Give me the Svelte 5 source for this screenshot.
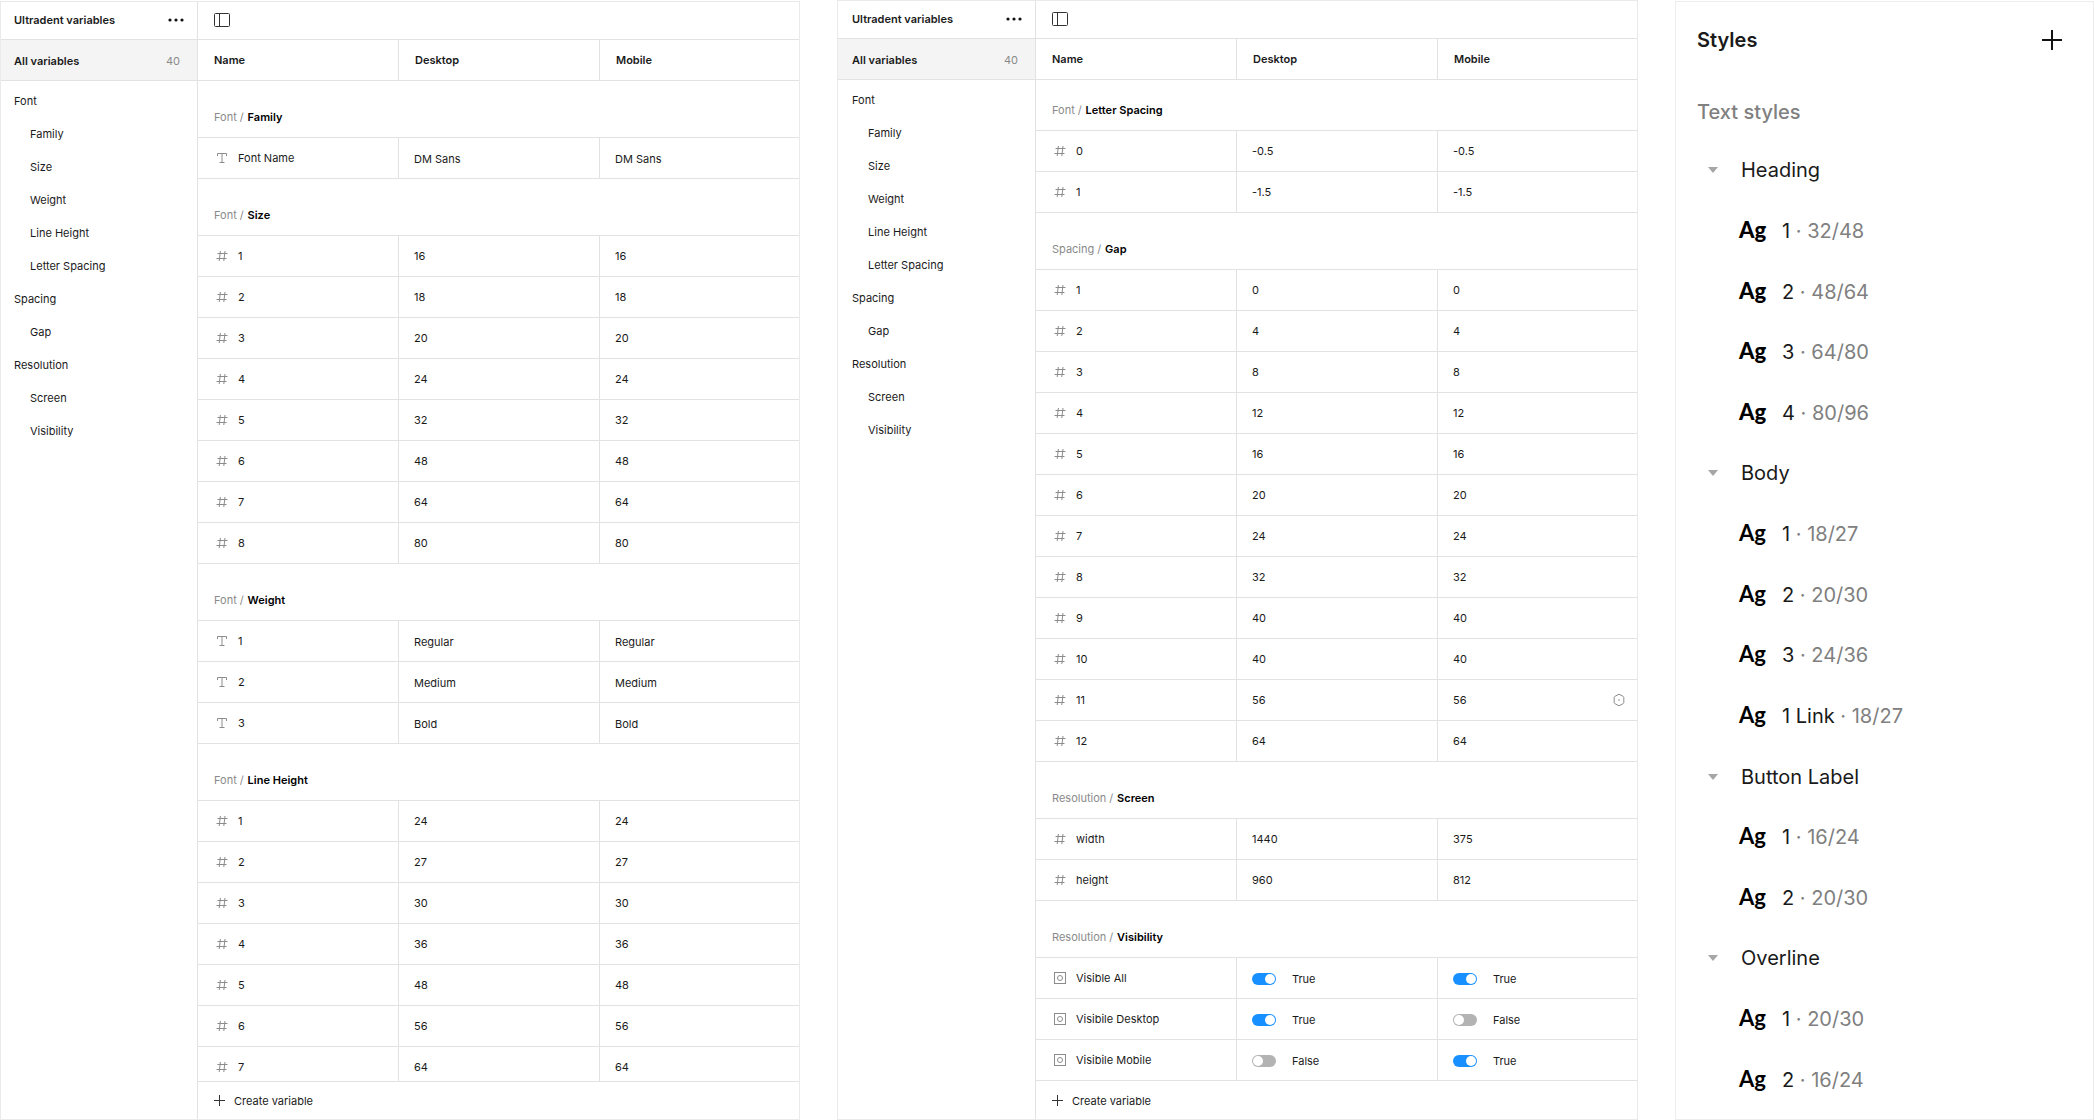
<script>
  const nav = [
    { label: 'Font', children: ['Family', 'Size', 'Weight', 'Line Height', 'Letter Spacing'] },
    { label: 'Spacing', children: ['Gap'] },
    { label: 'Resolution', children: ['Screen', 'Visibility'] }
  ];

  const numbers = (values) =>
    values.map((v, i) => ({ name: String(i + 1), kind: 'number', values: [v, v] }));
  const strings = (values) =>
    values.map((v, i) => ({ name: String(i + 1), kind: 'text', values: [v, v] }));

  const panels = [
    {
      id: 'first',
      groups: [
        { parent: 'Font', name: 'Family', rows: [{ name: 'Font Name', kind: 'text', values: ['DM Sans', 'DM Sans'] }] },
        { parent: 'Font', name: 'Size', rows: numbers([16, 18, 20, 24, 32, 48, 64, 80]) },
        { parent: 'Font', name: 'Weight', rows: strings(['Regular', 'Medium', 'Bold']) },
        { parent: 'Font', name: 'Line Height', rows: numbers([24, 27, 30, 36, 48, 56, 64]) }
      ]
    },
    {
      id: 'second',
      groups: [
        {
          parent: 'Font',
          name: 'Letter Spacing',
          rows: [
            { name: '0', kind: 'number', values: ['-0.5', '-0.5'] },
            { name: '1', kind: 'number', values: ['-1.5', '-1.5'] }
          ]
        },
        {
          parent: 'Spacing',
          name: 'Gap',
          rows: numbers([0, 4, 8, 12, 16, 20, 24, 32, 40, 40, 56, 64]).map((r) =>
            r.name === '11' ? { ...r, alias: true } : r
          )
        },
        {
          parent: 'Resolution',
          name: 'Screen',
          rows: [
            { name: 'width', kind: 'number', values: [1440, 375] },
            { name: 'height', kind: 'number', values: [960, 812] }
          ]
        },
        {
          parent: 'Resolution',
          name: 'Visibility',
          rows: [
            { name: 'Visible All', kind: 'boolean', values: [true, true] },
            { name: 'Visibile Desktop', kind: 'boolean', values: [true, false] },
            { name: 'Visibile Mobile', kind: 'boolean', values: [false, true] }
          ]
        }
      ]
    }
  ];

  const modes = ['Desktop', 'Mobile'];

  const styleRows = [
    { folder: 'Heading' },
    { name: '1', size: '32/48', weight: 'bold' },
    { name: '2', size: '48/64', weight: 'bold' },
    { name: '3', size: '64/80', weight: 'bold' },
    { name: '4', size: '80/96', weight: 'bold' },
    { folder: 'Body' },
    { name: '1', size: '18/27', weight: 'medium' },
    { name: '2', size: '20/30', weight: 'medium' },
    { name: '3', size: '24/36', weight: 'medium' },
    { name: '1 Link', size: '18/27', weight: 'medium' },
    { folder: 'Button Label' },
    { name: '1', size: '16/24', weight: 'medium' },
    { name: '2', size: '20/30', weight: 'medium' },
    { folder: 'Overline' },
    { name: '1', size: '20/30', weight: 'medium' },
    { name: '2', size: '16/24', weight: 'medium' }
  ];
</script>

<div class="board">
  {#each panels as panel (panel.id)}
    <section class="panel {panel.id}">
      <aside class="sidebar">
        <header class="bar title">
          <h2>Ultradent variables</h2>
          <button class="icon-button" aria-label="More options">
            <svg width="16" height="16" viewBox="0 0 16 16" fill="#111">
              <circle cx="2" cy="8" r="1.6" /><circle cx="8" cy="8" r="1.6" /><circle cx="14" cy="8" r="1.6" />
            </svg>
          </button>
        </header>
        <a class="all" href="#all"><strong>All variables</strong><span>40</span></a>
        <nav>
          {#each nav as group}
            <a href="#{group.label}">{group.label}</a>
            {#each group.children as child}
              <a class="child" href="#{child}">{child}</a>
            {/each}
          {/each}
        </nav>
      </aside>

      <div class="main">
        <div class="bar tools">
          <button class="icon-button" aria-label="Toggle sidebar">
            <svg width="16" height="16" viewBox="0 0 16 16" fill="none" stroke="#333">
              <rect x="0.5" y="1.5" width="15" height="13" rx="1" /><path d="M5.5 1.5v13" />
            </svg>
          </button>
        </div>
        <div class="scroll">
          <table>
            <thead>
              <tr>
                <th scope="col">Name</th>
                {#each modes as mode}<th scope="col">{mode}</th>{/each}
              </tr>
            </thead>
            {#each panel.groups as group}
              <tbody>
                <tr class="group">
                  <th colspan="3" scope="rowgroup"><span>{group.parent} /</span> {group.name}</th>
                </tr>
                {#each group.rows as row}
                  <tr>
                    <td>
                      <div class="cell">
                        {#if row.kind === 'number'}
                          <svg width="16" height="16" viewBox="0 0 16 16" fill="none" stroke="#8c8c8c">
                            <path d="M3.5 5.5h10M2.5 10.5h10M6.4 3L5.2 13M11 3L9.8 13" />
                          </svg>
                        {:else if row.kind === 'text'}
                          <svg width="16" height="16" viewBox="0 0 16 16" fill="none" stroke="#8c8c8c">
                            <path d="M3.5 6V3.5h9V6M8 3.5v9M5.5 12.5h5" />
                          </svg>
                        {:else}
                          <svg width="16" height="16" viewBox="0 0 16 16" fill="none" stroke="#8c8c8c">
                            <rect x="2.5" y="2.5" width="11" height="11" /><circle cx="8" cy="8" r="2.5" />
                          </svg>
                        {/if}
                        {row.name}
                      </div>
                    </td>
                    {#each row.values as value, i}
                      <td>
                        {#if row.kind === 'boolean'}
                          <label class="cell switch">
                            <input type="checkbox" checked={value} aria-label="{row.name} {modes[i]}" />
                            {value ? 'True' : 'False'}
                          </label>
                        {:else}
                          <div class="cell" class:lower={row.kind === 'text'}>
                            {value}
                            {#if row.alias && i === 1}
                              <button class="icon-button alias" aria-label="Apply variable">
                                <svg width="12" height="14" viewBox="0 0 12 14" fill="none" stroke="#8c8c8c">
                                  <path d="M6 1.2L10.2 3.4Q10.8 3.7 10.8 4.4V9.6Q10.8 10.3 10.2 10.6L6 12.8L1.8 10.6Q1.2 10.3 1.2 9.6V4.4Q1.2 3.7 1.8 3.4Z" />
                                  <circle cx="6" cy="7" r="0.8" fill="#8c8c8c" stroke="none" />
                                </svg>
                              </button>
                            {/if}
                          </div>
                        {/if}
                      </td>
                    {/each}
                  </tr>
                {/each}
              </tbody>
            {/each}
          </table>
        </div>
        <button class="create">
          <svg width="12" height="12" viewBox="0 0 12 12" stroke="#333"><path d="M5.5 0v11M0 5.5h11" /></svg>
          Create variable
        </button>
      </div>
    </section>
  {/each}

  <section class="styles">
    <header>
      <h2>Styles</h2>
      <button class="icon-button" aria-label="Add style">
        <svg width="20" height="20" viewBox="0 0 20 20" stroke="#111" stroke-width="2"><path d="M10 0v20M0 10h20" /></svg>
      </button>
    </header>
    <h3>Text styles</h3>
    <ul>
      {#each styleRows as row}
        {#if row.folder}
          <li class="folder">
            <svg width="10" height="6" viewBox="0 0 10 6" fill="#a6a6a6"><path d="M0 0h10L5 6z" /></svg>
            {row.folder}
          </li>
        {:else}
          <li class="style">
            <span class="sample {row.weight}">Ag</span>
            <span>{row.name} <span class="muted">· {row.size}</span></span>
          </li>
        {/if}
      {/each}
    </ul>
  </section>
</div>

<style>
  :global(body) {
    margin: 0;
    background: #fff;
  }

  .board {
    --line: #e2e2e2;
    --edge: #e9eaea;
    display: grid;
    grid-template-columns: 800fr 801fr 419fr;
    gap: 37px;
    height: 100vh;
    box-sizing: border-box;
    font: 11px/16px Inter, sans-serif;
    color: #1a1a1a;
  }

  .board :is(h2, h3, ul) {
    margin: 0;
    padding: 0;
    font-size: inherit;
  }

  a {
    color: inherit;
    text-decoration: none;
  }

  svg {
    display: block;
    flex: none;
  }

  .icon-button {
    display: block;
    padding: 0;
    border: 0;
    background: none;
  }

  .panel {
    display: grid;
    grid-template-columns: 196px minmax(0, 1fr);
    min-height: 0;
    box-sizing: border-box;
    border: 1px solid var(--edge);
  }

  .panel.first,
  .styles {
    margin-top: 1px;
  }

  .panel.second {
    grid-template-columns: 197px minmax(0, 1fr);
  }

  .bar {
    display: flex;
    align-items: center;
    height: 37px;
    border-bottom: 1px solid var(--line);
  }

  .title {
    box-sizing: border-box;
    height: 38px;
    justify-content: space-between;
    padding: 0 13px 2px 13px;
  }

  .title h2,
  .all strong {
    font-weight: 600;
  }

  .all {
    display: flex;
    justify-content: space-between;
    padding: 13px 17px 11px 13px;
    background: #f4f4f4;
    border-bottom: 1px solid var(--line);
  }

  .all span {
    color: #8a8a8a;
  }

  nav {
    display: flex;
    flex-direction: column;
    padding-top: 4px;
  }

  nav a {
    padding-left: 13px;
    line-height: 33px;
  }

  nav .child {
    padding-left: 29px;
  }

  .second .title,
  .second .all,
  .second nav {
    padding-left: 14px;
  }

  .second nav a {
    padding-left: 0;
  }

  .second nav .child {
    padding-left: 16px;
  }

  .main {
    display: flex;
    flex-direction: column;
    min-height: 0;
    border-left: 1px solid var(--line);
  }

  .tools {
    flex: none;
    box-sizing: border-box;
    height: 38px;
    padding: 0 16px 1px;
  }

  .scroll {
    flex: 1;
    min-height: 0;
    overflow: hidden;
  }

  table {
    width: calc(100% + 2px);
    table-layout: fixed;
    border-spacing: 0;
  }

  th,
  td {
    height: 41px;
    box-sizing: border-box;
    padding: 0 0 0 15px;
    border-bottom: 1px solid var(--line);
    text-align: left;
  }

  th {
    padding-left: 16px;
    font-weight: 600;
  }

  td:not(:last-child),
  thead th:not(:last-child) {
    border-right: 1px solid var(--line);
  }

  .group th {
    height: 57px;
    padding-bottom: 12px;
    vertical-align: bottom;
    color: #000;
  }

  .second tbody:nth-of-type(1) .group th {
    height: 51px;
  }

  .group span {
    margin-right: 1px;
    font-weight: 400;
    color: #8a8a8a;
  }

  .cell {
    display: flex;
    align-items: center;
    gap: 8px;
  }

  td:first-child .cell {
    padding-left: 1px;
  }

  .lower,
  .switch {
    padding-top: 2px;
  }

  .switch {
    gap: 16px;
  }

  .switch input {
    appearance: none;
    width: 24px;
    height: 12px;
    margin: 0;
    padding: 1px;
    box-sizing: border-box;
    border-radius: 6px;
    background: #b3b3b3;
  }

  .switch input::before {
    content: '';
    display: block;
    width: 10px;
    height: 10px;
    border-radius: 50%;
    background: #fff;
  }

  .switch input:checked {
    background: #1890ff;
  }

  .switch input:checked::before {
    margin-left: auto;
  }

  .alias {
    margin-left: auto;
    margin-right: 14px;
  }

  .create {
    display: flex;
    align-items: center;
    gap: 8px;
    height: 38px;
    box-sizing: border-box;
    padding: 1px 16px 0;
    border: 0;
    border-top: 1px solid var(--line);
    background: none;
    color: inherit;
    font: inherit;
  }

  .second .create {
    height: 39px;
  }

  .styles {
    display: flex;
    flex-direction: column;
    box-sizing: border-box;
    padding: 24px 31px 9px 21px;
    border: 1px solid #ededed;
    font-size: 20px;
    line-height: 28px;
  }

  .styles header {
    display: flex;
    justify-content: space-between;
    align-items: center;
  }

  .styles h2 {
    font-size: 20px;
    font-weight: 600;
  }

  .styles h3 {
    margin-top: 44px;
    font-size: 20px;
    font-weight: 500;
    color: #808080;
  }

  .styles ul {
    display: flex;
    flex: 1;
    flex-direction: column;
    margin-top: 14px;
    list-style: none;
  }

  .styles li {
    display: flex;
    flex: 1;
    align-items: center;
  }

  .folder {
    gap: 23px;
    padding-left: 11px;
  }

  .style {
    gap: 15px;
    padding-left: 42px;
  }

  .sample {
    width: 28px;
    padding-bottom: 2px;
    font-family: Lato, sans-serif;
    font-size: 22px;
    color: #000;
  }

  .bold {
    font-weight: 900;
  }

  .medium {
    font-weight: 700;
  }

  .muted {
    color: #808080;
  }
</style>
